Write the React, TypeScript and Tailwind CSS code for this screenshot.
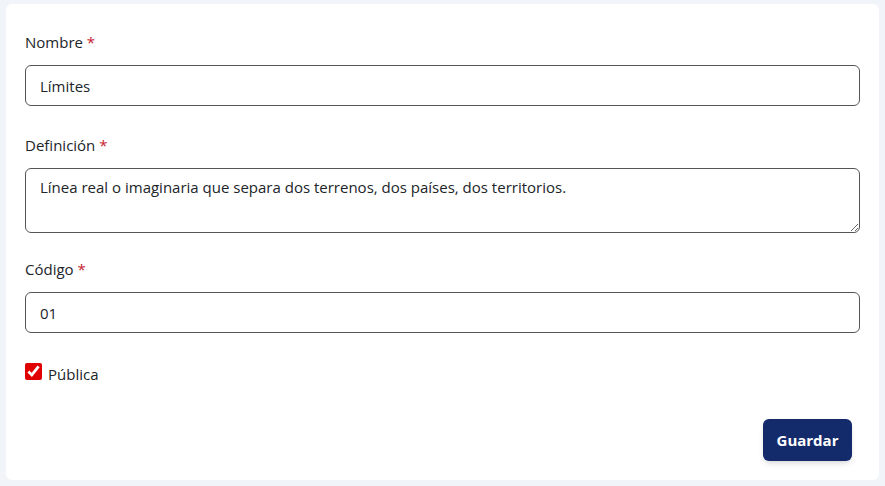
import React, { useState } from 'react';

const Label = ({ text }: { text: string }) => (
    <label className="block text-[15px] leading-[20px] text-[#212529] mb-[13px]">
        {text} <span className="text-[#c8202f]">*</span>
    </label>
);

export default function App() {
    const [nombre, setNombre] = useState('Límites');
    const [definicion, setDefinicion] = useState('Línea real o imaginaria que separa dos terrenos, dos países, dos territorios.');
    const [codigo, setCodigo] = useState('01');
    const [publica, setPublica] = useState(true);

    return (
        <div className="w-[885px] h-[486px] bg-[#f1f4f8] pt-[4px] px-[6px]" style={{ fontFamily: '"Open Sans", sans-serif' }}>
            <div className="w-[873px] h-[476px] bg-white rounded-[6px] px-[19px] pt-[28px]">
                <Label text="Nombre" />
                <input
                    value={nombre}
                    onChange={e => setNombre(e.target.value)}
                    className="w-full h-[41px] border border-[#555] rounded-[6px] px-[14px] text-[15px] text-[#212529] outline-none"
                />

                <div className="mt-[29px]">
                    <Label text="Definición" />
                    <textarea
                        value={definicion}
                        onChange={e => setDefinicion(e.target.value)}
                        className="block w-full h-[65px] border border-[#555] rounded-[6px] px-[14px] pt-[8px] text-[15px] leading-[20px] text-[#212529] outline-none resize-y"
                    />
                </div>

                <div className="mt-[26px]">
                    <Label text="Código" />
                    <input
                        value={codigo}
                        onChange={e => setCodigo(e.target.value)}
                        className="w-full h-[41px] border border-[#555] rounded-[6px] px-[14px] text-[15px] text-[#212529] outline-none"
                    />
                </div>

                <label className="flex items-end gap-[6px] mt-[30px] text-[15px] leading-[20px] text-[#212529]">
                    <input
                        type="checkbox"
                        checked={publica}
                        onChange={e => setPublica(e.target.checked)}
                        className="w-[17px] h-[17px] mb-[4px] accent-[#e00000]"
                    />
                    Pública
                </label>

                <div className="flex justify-end mt-[35px] pr-[8px]">
                    <button className="w-[89px] h-[42px] bg-[#132a6b] text-white font-bold text-[15px] rounded-[6px] shadow-md">
                        Guardar
                    </button>
                </div>
            </div>
        </div>
    );
}
